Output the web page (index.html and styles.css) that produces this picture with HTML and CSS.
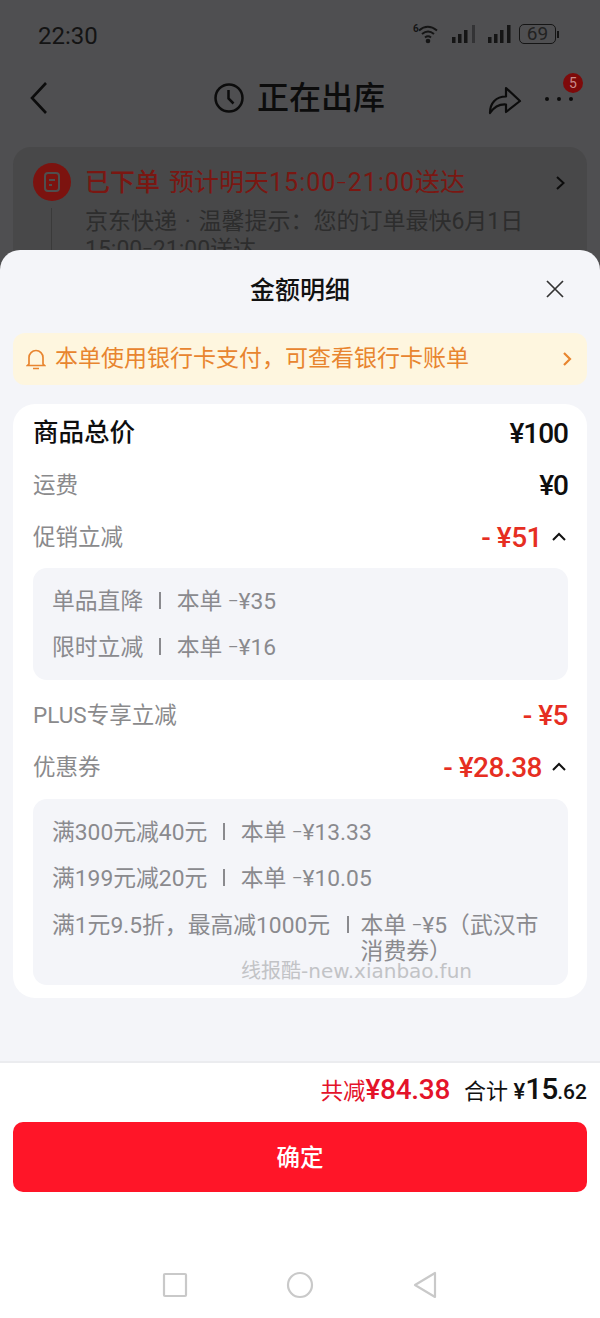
FILE: index.html
```html
<!DOCTYPE html>
<html lang="zh-CN">
<head>
<meta charset="utf-8">
<title>金额明细</title>
<link rel="stylesheet" href="styles.css">
</head>
<body>
<div class="screen">
  <div class="behind">
    <div class="status">
      <span class="time">22:30</span>
      <div class="status-icons">
        <svg width="27" height="20" viewBox="0 0 27 20"><text x="0" y="8" class="six">6</text><path d="M6 6.500c5.500-4.700 12-4.700 18 0M9 10c3.800-3.200 8.300-3.200 12 0M12 13.500c2-1.600 4-1.600 6 0" fill="none" stroke="#151515" stroke-width="2"/><circle cx="15" cy="17" r="2.300" fill="#151515"/></svg>
        <svg width="24" height="18" viewBox="0 0 24 18"><path d="M0 12h3.500v6H0zM6 9h3.500v9H6zM12 5h3.500v13H12z" fill="#151515"/><path d="M20 0h3v18h-3z" fill="#333335"/></svg>
        <svg class="sig-last" width="24" height="18" viewBox="0 0 24 18"><path d="M0 12h3.500v6H0zM6 9h3.500v9H6zM12 5h3.500v13H12zM19 0h3.500v18H19z" fill="#151515"/></svg>
        <div class="battery"><span class="battery-body">69</span><span class="battery-tip"></span></div>
      </div>
    </div>
    <div class="nav">
      <svg class="back" width="20" height="34" viewBox="0 0 20 34"><path d="M17 2 3 17l14 15" fill="none" stroke="#0c0c0c" stroke-width="2.600"/></svg>
      <div class="nav-title">
        <svg width="32" height="32" viewBox="0 0 32 32"><circle cx="16" cy="16" r="13.500" fill="none" stroke="#0c0c0c" stroke-width="2.500"/><path d="M15.500 8v8.500l5 5" fill="none" stroke="#0c0c0c" stroke-width="2.500"/></svg>
        <span>正在出库</span>
      </div>
      <svg class="share" width="34" height="32" viewBox="0 0 34 32"><path d="M2 30C2 20 8 13.500 18 13.500V5l14 13-14 11v-7.500C11 21 6 24 2 30Z" fill="none" stroke="#0c0c0c" stroke-width="2.200" stroke-linejoin="round"/></svg>
      <div class="more"><i></i><i></i><i></i><span class="badge">5</span></div>
    </div>
    <div class="order">
      <div class="order-main">
        <div class="order-icon"><svg width="20" height="24" viewBox="0 0 20 24"><rect x="3" y="3" width="14" height="18" rx="3" fill="none" stroke="#4f4f4f" stroke-width="2"/><path d="M7 10h6M7 15h3" stroke="#4f4f4f" stroke-width="2"/></svg></div>
        <div class="order-text">
          <div class="order-head"><b>已下单</b><span>预计明天<span class="wide">15:00<span class="dash">–</span>21:00</span>送达</span></div>
          <div class="order-sub">京东快递 · 温馨提示：您的订单最快6月1日<br>15:00<span class="dash">–</span>21:00送达</div>
        </div>
        <svg class="order-chev" width="12" height="18" viewBox="0 0 12 18"><path d="m3 3 6.500 6-6.500 6" fill="none" stroke="#0c0c0c" stroke-width="2"/></svg>
      </div>
    </div>
  </div>

  <div class="sheet">
    <div class="sheet-head">
      <span>金额明细</span>
      <svg class="close" width="20" height="20" viewBox="0 0 20 20"><path d="m2 2 16 16M18 2 2 18" stroke="#333" stroke-width="1.700"/></svg>
    </div>
    <div class="notice">
      <svg width="20" height="22" viewBox="0 0 20 22"><path d="M3 16V9.500a7 7 0 0 1 14 0V16l1.500 1.500h-17ZM7 20.500h6" fill="none" stroke="#e8852f" stroke-width="1.700"/></svg>
      <span class="notice-text">本单使用银行卡支付，可查看银行卡账单</span>
      <svg width="12" height="18" viewBox="0 0 12 18"><path d="m3 3 6 6-6 6" fill="none" stroke="#e8852f" stroke-width="2.200"/></svg>
    </div>
    <div class="card">
      <div class="row row-total"><span class="label-strong">商品总价</span><span class="amount">¥100</span></div>
      <div class="row"><span class="label">运费</span><span class="amount">¥0</span></div>
      <div class="row"><span class="label">促销立减</span><span class="amount red">- ¥51<svg class="up" width="16" height="10" viewBox="0 0 16 10"><path d="m2 8 6-6 6 6" fill="none" stroke="#111" stroke-width="2"/></svg></span></div>
      <div class="detail">
        <div class="detail-row"><span>单品直降</span><i class="bar"></i><span>本单 <span class="dash">–</span>¥35</span></div>
        <div class="detail-row"><span>限时立减</span><i class="bar"></i><span>本单 <span class="dash">–</span>¥16</span></div>
      </div>
      <div class="row row-plus"><span class="label">PLUS专享立减</span><span class="amount red">- ¥5</span></div>
      <div class="row"><span class="label">优惠券</span><span class="amount red">- ¥28.38<svg class="up" width="16" height="10" viewBox="0 0 16 10"><path d="m2 8 6-6 6 6" fill="none" stroke="#111" stroke-width="2"/></svg></span></div>
      <div class="detail detail-last">
        <div class="detail-row"><span>满300元减40元</span><i class="bar"></i><span>本单 <span class="dash">–</span>¥13.33</span></div>
        <div class="detail-row"><span>满199元减20元</span><i class="bar"></i><span>本单 <span class="dash">–</span>¥10.05</span></div>
        <div class="detail-row detail-wrap"><span class="nowrap">满1元9.5折，最高减1000元</span><i class="bar bar-tight"></i><span class="wrap-text">本单 <span class="dash">–</span>¥5（武汉市消费券）</span></div>
        <span class="watermark">线报酷-new.xianbao.fun</span>
      </div>
    </div>
    <div class="footer">
      <div class="sum">
        <span class="sum-red">共减<b>¥84.38</b></span>
        <span class="sum-total">合计 <b class="yen">¥</b><b class="big">15</b><b class="cents">.62</b></span>
      </div>
      <button class="confirm"><span class="confirm-text">确定</span></button>
      <div class="sysnav">
        <svg width="26" height="26" viewBox="0 0 26 26"><rect x="2" y="2" width="22" height="22" rx="1" fill="none" stroke="#c9c9c9" stroke-width="2.200"/></svg>
        <svg width="28" height="28" viewBox="0 0 28 28"><circle cx="14" cy="14" r="12" fill="none" stroke="#c9c9c9" stroke-width="2.200"/></svg>
        <svg width="26" height="28" viewBox="0 0 26 28"><path d="M23 2v24L3 14Z" fill="none" stroke="#c9c9c9" stroke-width="2.200" stroke-linejoin="round"/></svg>
      </div>
    </div>
  </div>
</div>
</body>
</html>
```

FILE: styles.css
```css
* { box-sizing: border-box; }
html, body { margin: 0; padding: 0; }
body {
  width: 600px;
  height: 1318px;
  overflow: hidden;
  font-family: Roboto, "Noto Sans CJK SC", sans-serif;
  background: #4f4f51;
}
.screen { width: 600px; height: 1318px; display: flex; flex-direction: column; }

/* dimmed page behind the sheet */
.behind { height: 250px; overflow: hidden; flex: none; }
.status {
  height: 66px;
  padding: 17px 41px 0 38px;
  display: flex;
  justify-content: space-between;
  align-items: flex-start;
}
.time { font-size: 24px; line-height: 38px; color: #141414; }
.status-icons { display: flex; align-items: center; gap: 12px; height: 34px; }
.sig-last { margin-right: -5px; }
.six { font-size: 10px; font-weight: 700; fill: #151515; }
.battery { display: flex; align-items: center; gap: 1px; }
.battery-body {
  width: 37px; height: 20px;
  border: 1.500px solid #151515;
  border-radius: 5px;
  font-size: 19px;
  line-height: 17px;
  text-align: center;
  color: #222;
}
.battery-tip { width: 2px; height: 7px; background: #151515; }

.nav { height: 64px; display: flex; align-items: center; position: relative; padding-left: 29px; }
.nav-title {
  position: absolute; left: 213px; top: 12px;
  display: flex; align-items: center; gap: 12px;
  font-size: 32px; line-height: 40px; color: #0c0c0c;
  font-weight: 500;
}
.share { position: absolute; left: 488px; top: 17px; }
.more { position: absolute; left: 545px; top: 31px; width: 28px; display: flex; justify-content: space-between; }
.more i { width: 4px; height: 4px; border-radius: 50%; background: #0c0c0c; }
.badge {
  position: absolute; left: 18px; top: -24px;
  width: 20px; height: 20px; border-radius: 50%;
  background: #7e0a0a; color: #c98a8a;
  font-size: 14px; line-height: 20px; text-align: center;
}

.order {
  margin: 17px 13px 0;
  height: 120px;
  background: #484849;
  border-radius: 18px;
  padding: 16px 20px;
}
.order-main { display: flex; align-items: flex-start; position: relative; }
.order-icon {
  width: 38px; height: 38px; border-radius: 50%;
  background: #7c130f; flex: none;
  display: flex; align-items: center; justify-content: center;
  position: relative;
}
.order-icon::after {
  content: ""; position: absolute; left: 18px; top: 45px;
  width: 1px; height: 60px; background: #3a3a3a;
}
.order-text { margin-left: 14px; }
.order-head { font-size: 25px; line-height: 36px; margin-top: 2px; color: #7a1712; white-space: nowrap; }
.order-head b { font-weight: 500; margin-right: 9px; }
.wide { letter-spacing: 1px; }
.dash { font-size: 16px; vertical-align: 2px; line-height: 1; }
.order-sub { font-size: 23px; line-height: 28px; color: #2d2d2d; margin-top: 7px; white-space: nowrap; word-spacing: 2px; }
.order-chev { position: absolute; left: 521px; top: 11px; }

/* sheet */
.sheet {
  flex: 1;
  background: #f4f5f9;
  border-radius: 20px 20px 0 0;
  display: flex;
  flex-direction: column;
  position: relative;
}
.sheet-head {
  height: 83px;
  padding-bottom: 7px;
  display: flex; align-items: center; justify-content: center;
  font-size: 25px; font-weight: 500; color: #111;
  position: relative;
}
.close { position: absolute; left: 545px; top: 29px; }
.notice {
  margin: 0 13px;
  height: 52px;
  background: #fef6df;
  border-radius: 12px;
  display: flex; align-items: center;
  padding: 0 14px 0 13px;
  color: #e8852f;
}
.notice-text { font-size: 23px; margin-left: 9px; margin-bottom: 6px; flex: 1; }
.card {
  margin: 19px 13px 0;
  height: 594px;
  background: #fff;
  border-radius: 22px;
  padding: 8px 19px 0 20px;
  display: flex;
  flex-direction: column;
}
.row { height: 52px; display: flex; align-items: center; justify-content: space-between; flex: none; }
.row-total { height: 42px; margin-bottom: 5px; }
.row-plus { height: 51px; }
.label { font-size: 22.500px; color: #8a8a8c; margin-bottom: 5px; }
.label-strong { font-size: 25.500px; font-weight: 500; color: #0e0e0e; margin-bottom: 8px; }
.amount { font-size: 28px; letter-spacing: -1px; font-weight: 500; color: #0e0e0e; display: flex; align-items: center; }
.red { color: #e62e22; letter-spacing: -0.5px; }
.up { margin-left: 9px; margin-right: 1px; }
.detail {
  background: #f4f5f9;
  border-radius: 14px;
  padding: 18.500px 19px 0;
  height: 112px;
  margin-top: 5px;
  margin-bottom: 10px;
  flex: none;
}
.detail-last { height: 186px; margin-top: 6px; margin-bottom: 0; position: relative; }
.detail-row {
  display: flex; align-items: flex-start;
  font-size: 22.800px; line-height: 30px; color: #8a8a8e;
  margin-bottom: 16.500px;
}
.detail-wrap { line-height: 26px; padding-top: 2px; }
.nowrap { white-space: nowrap; flex: none; }
.bar { width: 1.500px; height: 17px; background: #8a8a8e; margin: 5px 16px 0; flex: none; }
.bar-tight { margin: 3px 12px 0 17px; }
.wrap-text { width: 190px; flex: none; }
.watermark {
  position: absolute; left: 208px; top: 159px;
  font-family: "DejaVu Sans", "Noto Sans CJK SC", sans-serif;
  font-size: 20px; line-height: 26px; color: #c2c3c6; white-space: nowrap;
}

/* footer */
.footer {
  margin-top: 63px;
  flex: 1;
  background: #fff;
  border-top: 2px solid #ebecef;
  display: flex;
  flex-direction: column;
  padding: 0 13px;
}
.sum { display: flex; justify-content: flex-end; align-items: baseline; height: 59px; padding-top: 8px; gap: 14px; flex: none; }
.sum-red { font-size: 22.500px; color: #e4132a; }
.sum-red b { font-size: 28px; font-weight: 500; letter-spacing: -0.3px; }
.sum-total { font-size: 22px; color: #111; }
.yen { font-size: 22px; font-weight: 500; }
.big { font-size: 30px; font-weight: 500; letter-spacing: -1px; }
.cents { font-size: 21px; font-weight: 500; }
.confirm {
  height: 70px; width: 100%; flex: none;
  border: 0; border-radius: 10px;
  background: #ff1528; color: #fff;
  padding: 0 0 3px;
  font: 500 23.500px Roboto, "Noto Sans CJK SC", sans-serif;
}
.sysnav {
  display: flex; justify-content: center; align-items: center;
  gap: 98px;
  margin-top: 79px;
  margin-left: -1px;
}
```
